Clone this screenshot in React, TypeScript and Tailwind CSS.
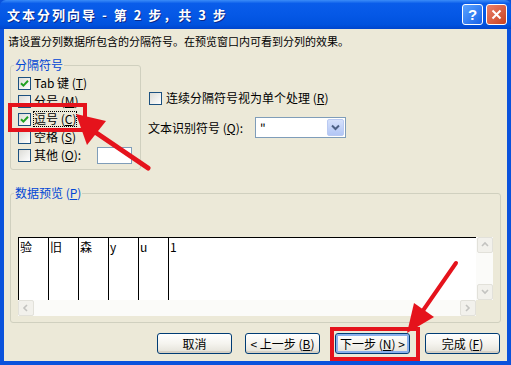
import React from "react";

const CB = ({ checked }: { checked?: boolean }) => (
  <span className="w-[13px] h-[13px] border border-[#1C5180] bg-linear-to-br from-[#DCDCD7] to-white flex items-center justify-center shrink-0">
    {checked && (
      <svg width="9" height="9" viewBox="0 0 9 9">
        <path d="M1 4.2 L3.4 6.6 L8 1.8" stroke="#21A121" strokeWidth="2" fill="none" />
      </svg>
    )}
  </span>
);

const Row = ({ checked, label, acc, dotted }: { checked?: boolean; label: string; acc: string; dotted?: boolean }) => (
  <div className="h-[18px] flex items-center gap-[3px]">
    <CB checked={checked} />
    <span className={"text-[12px] leading-[14px] whitespace-pre " + (dotted ? "outline outline-1 outline-dotted outline-black" : "")}>
      {label}(<span className="underline">{acc}</span>)
    </span>
  </div>
);

const Btn = ({ children, focus, ml }: { children: React.ReactNode; focus?: boolean; ml: string }) => (
  <div
    className={
      "w-[75px] h-[21px] rounded-[3px] border border-[#003C74] bg-linear-to-b from-white via-[#F5F4EF] to-[#E3E1D8] flex items-center justify-center text-[12px] leading-[14px] whitespace-pre " +
      ml +
      (focus ? " shadow-[inset_0_0_0_2px_#8AB0EC]" : " shadow-[inset_0_-2px_0_#D6D0C5]")
    }
  >
    {children}
  </div>
);

const Arrow = ({ dir }: { dir: "up" | "down" | "left" | "right" }) => {
  const d =
    dir === "up" ? "M2 6 L5 3 L8 6" : dir === "down" ? "M2 3 L5 6 L8 3" : dir === "left" ? "M6 2 L3 5 L6 8" : "M3 2 L6 5 L3 8";
  return (
    <svg width="10" height="10" viewBox="0 0 10 10">
      <path d={d} stroke="#C3C3C0" strokeWidth="1.6" fill="none" />
    </svg>
  );
};

const SBtn = ({ dir }: { dir: "up" | "down" | "left" | "right" }) => (
  <div className="w-[16px] h-[16px] rounded-[2px] border border-[#E2E1DA] bg-[#F2F1EC] flex items-center justify-center shrink-0">
    <Arrow dir={dir} />
  </div>
);

export default function App() {
  const cols = ["验", "旧", "森", "y", "u"];
  return (
    <div className="w-[511px] h-[365px] relative overflow-hidden bg-[#0A52DC] flex flex-col font-['Noto_Sans_CJK_SC',sans-serif] text-black">
      {/* title bar */}
      <div className="h-[29px] shrink-0 flex items-center pl-[7px] pr-[4px] bg-[linear-gradient(to_bottom,#3B8CF8_0%,#0A5DEA_12%,#0558E6_50%,#0052DE_85%,#0045CC_100%)] rounded-t-[6px]">
        <span className="text-white font-bold text-[13px] leading-[16px] tracking-[2px] whitespace-pre [text-shadow:1px_1px_0_#0A2A8A]">
          文本分列向导 - 第 2 步，共 3 步
        </span>
        <div className="ml-auto flex gap-[3px]">
          <div className="w-[21px] h-[21px] rounded-[3px] border border-white bg-linear-to-br from-[#5AA3FF] to-[#1560E8] flex items-center justify-center text-white font-bold text-[15px] leading-none font-['Liberation_Sans',sans-serif]">
            ?
          </div>
          <div className="w-[21px] h-[21px] rounded-[3px] border border-white bg-linear-to-br from-[#E9806A] to-[#C9401A] flex items-center justify-center">
            <svg width="11" height="11" viewBox="0 0 11 11">
              <path d="M1.5 1.5 L9.5 9.5 M9.5 1.5 L1.5 9.5" stroke="white" strokeWidth="2" />
            </svg>
          </div>
        </div>
      </div>

      {/* client */}
      <div className="flex-1 mx-[4px] mb-[4px] bg-[#ECE9D8] flex flex-col">
        <p className="pt-[6px] pl-[4px] text-[11px] leading-[13px] whitespace-pre">请设置分列数据所包含的分隔符号。在预览窗口内可看到分列的效果。</p>

        <div className="flex mt-[10px]">
          <fieldset className="ml-[6px] w-[131px] h-[112px] border border-[#D0D0BF] rounded-[3px] pl-[7px] pt-[2px] m-0">
            <legend className="text-[12px] leading-[14px] text-[#0046D5] px-[1px] ml-[-4px]">分隔符号</legend>
            <Row checked label="Tab 键 " acc="T" />
            <Row label="分号 " acc="M" />
            <Row checked label="逗号 " acc="C" dotted />
            <Row label="空格 " acc="S" />
            <div className="h-[18px] flex items-center gap-[3px]">
              <CB />
              <span className="text-[12px] leading-[14px] whitespace-pre">
                其他 (<span className="underline">O</span>):
              </span>
              <div className="ml-[13px] w-[35px] h-[17px] bg-white border border-[#7F9DB9]" />
            </div>
          </fieldset>

          <div className="ml-[7px] pt-[33px] flex flex-col">
            <div className="flex items-center gap-[4px] pl-[1px]">
              <CB />
              <span className="text-[12px] leading-[14px] whitespace-pre">
                连续分隔符号视为单个处理 (<span className="underline">R</span>)
              </span>
            </div>
            <div className="flex items-center mt-[12px]">
              <span className="text-[12px] leading-[14px] whitespace-pre w-[107px]">
                文本识别符号 (<span className="underline">Q</span>):
              </span>
              <div className="w-[91px] h-[21px] bg-white border border-[#7F9DB9] flex items-center">
                <span className="pl-[4px] text-[12px] leading-[14px] flex-1">"</span>
                <div className="w-[17px] h-[17px] mr-[1px] rounded-[2px] border border-[#BACAF2] bg-linear-to-b from-[#D6E1FB] to-[#B2C6F5] flex items-center justify-center">
                  <svg width="9" height="7" viewBox="0 0 9 7">
                    <path d="M1 1.5 L4.5 5 L8 1.5" stroke="#4D6185" strokeWidth="2" fill="none" />
                  </svg>
                </div>
              </div>
            </div>
          </div>
        </div>

        <fieldset className="ml-[6px] mt-[16px] w-[491px] border border-[#D0D0BF] rounded-[3px] pl-[7px] pt-[37px] pb-[6px] m-0">
          <legend className="text-[12px] leading-[14px] text-[#0046D5] px-[1px] ml-[-4px] whitespace-pre">
            数据预览 (<span className="underline">P</span>)
          </legend>
          <div className="w-[475px] flex flex-col">
            <div className="flex h-[63px]">
              <div className="flex-1 bg-white border-t border-black flex">
                {cols.map((c, i) => (
                  <div key={i} className="w-[30px] h-full border-l border-black pl-[1px] pt-[2px] text-[12px] leading-[14px]">
                    {c}
                  </div>
                ))}
                <div className="flex-1 h-full border-l border-black pl-[1px] pt-[2px] text-[12px] leading-[14px]">1</div>
              </div>
              <div className="w-[17px] h-full bg-[#FBFBF9] flex flex-col justify-between pl-[1px]">
                <SBtn dir="up" />
                <SBtn dir="down" />
              </div>
            </div>
            <div className="flex h-[16px]">
              <div className="flex-1 bg-[#FBFBF9] flex justify-between">
                <SBtn dir="left" />
                <SBtn dir="right" />
              </div>
              <div className="w-[17px] bg-[#ECE9D8]" />
            </div>
          </div>
        </fieldset>

        <div className="flex justify-end pr-[7px] mt-[10px]">
          <Btn ml="">取消</Btn>
          <Btn ml="ml-[13px]">
            &lt; 上一步 (<span className="underline">B</span>)
          </Btn>
          <Btn ml="ml-[15px]" focus>
            下一步 (<span className="underline">N</span>) &gt;
          </Btn>
          <Btn ml="ml-[15px]">
            完成 (<span className="underline">F</span>)
          </Btn>
        </div>
      </div>

      {/* annotations */}
      <svg className="absolute inset-0 pointer-events-none" width="511" height="365" viewBox="0 0 511 365">
        <rect x="10" y="105" width="75" height="25" fill="none" stroke="#E5131C" strokeWidth="4" />
        <rect x="332" y="329" width="86" height="30" fill="none" stroke="#E5131C" strokeWidth="4" />
        <line x1="148" y1="168" x2="95" y2="132" stroke="#E5131C" strokeWidth="5" strokeLinecap="round" />
        <polygon points="76,114 106,121 87,145" fill="#E5131C" />
        <line x1="456" y1="263" x2="422" y2="312" stroke="#E5131C" strokeWidth="4" strokeLinecap="round" />
        <polygon points="407,333 434,317 414,303" fill="#E5131C" />
      </svg>
    </div>
  );
}
